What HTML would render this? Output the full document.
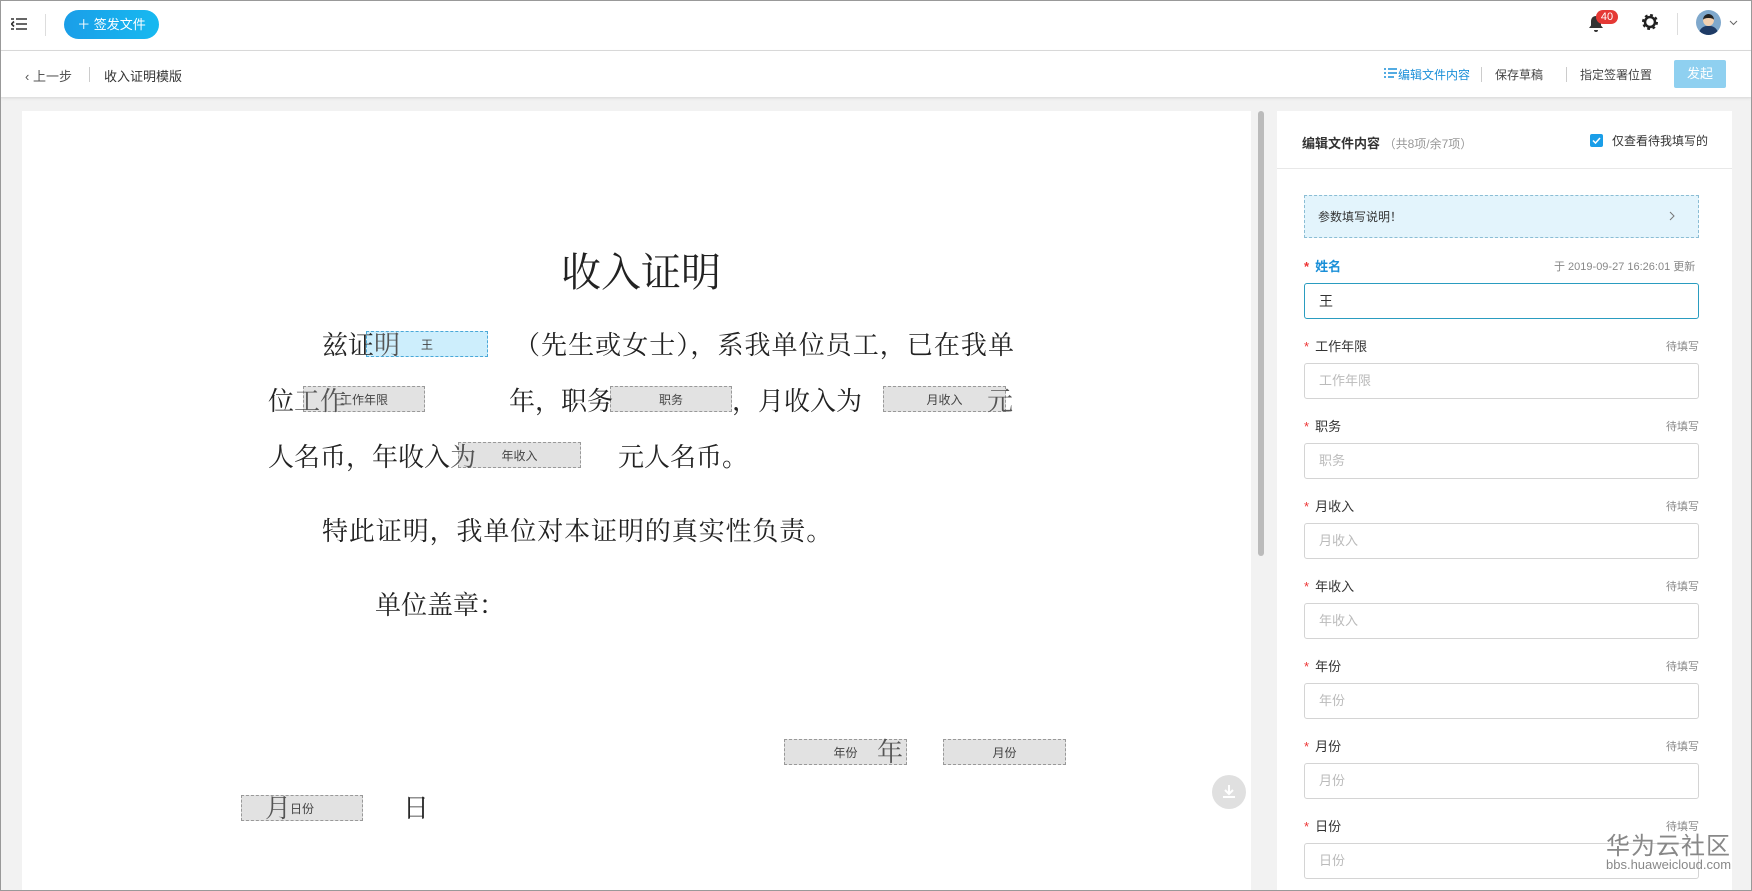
<!DOCTYPE html>
<html><head><meta charset="utf-8"><style>
*{margin:0;padding:0;box-sizing:border-box}
body{width:1752px;height:891px;overflow:hidden;background:#f2f2f2;font-family:"Liberation Sans","Noto Sans CJK SC",sans-serif;position:relative;color:#333}
.a{position:absolute;white-space:nowrap}
.top{left:0;top:0;width:1752px;height:51px;background:#fff;border-bottom:1px solid #ddd}
.sec{left:0;top:51px;width:1752px;height:46px;background:#fff;box-shadow:0 1px 3px rgba(0,0,0,.12)}
.doc{left:22px;top:111px;width:1229px;height:780px;background:#fff}
.serif{font-family:"Noto Serif CJK SC","Liberation Serif",serif;color:#222;font-size:26px;line-height:36px;font-feature-settings:"fwid";z-index:2}
.f{position:absolute;background:#e2e2e2;border:1px dashed #999;font-size:12px;color:#444;text-align:center;line-height:26px;font-family:"Liberation Sans","Noto Sans CJK SC",sans-serif;z-index:1}
.panel{left:1277px;top:111px;width:455px;height:780px;background:#fff}
.lbl{font-size:13px;color:#333}
.star{color:#e33;margin-right:6px}
.inp{position:absolute;left:1304px;width:395px;height:36px;border:1px solid #d4d4d4;border-radius:3px;font-size:13px;color:#bbb;padding-left:14px;line-height:34px}
.pend{font-size:11px;color:#888}
</style></head><body>
<div class="a top"></div>
<svg class="a" style="left:11px;top:17px" width="16" height="14"><path d="M5 2h11M5 7h11M5 12h11M0 2h3M0 12h3M3 4.5L0.5 7 3 9.5" stroke="#333" stroke-width="1.6" fill="none"/></svg>
<div class="a" style="left:45px;top:14px;width:1px;height:22px;background:#ddd"></div>
<div class="a" style="left:64px;top:10px;width:95px;height:29px;border-radius:15px;background:linear-gradient(90deg,#1a9ee8,#17b9f0);color:#fff;font-size:13px;line-height:29px;text-align:center">＋ 签发文件</div>
<svg class="a" style="left:1587px;top:15px" width="18" height="18"><path d="M9 1c-3.5 0-5 2.5-5 5.5v4L2 13h14l-2-2.5v-4C14 3.5 12.5 1 9 1zM7 15h4a2 2 0 0 1-4 0z" fill="#333"/></svg>
<div class="a" style="left:1596px;top:10px;width:22px;height:14px;background:#e53935;border-radius:7px;color:#fff;font-size:11px;line-height:14px;text-align:center">40</div>
<svg class="a" style="left:1641px;top:13px" width="18" height="18" viewBox="0 0 18 18"><circle cx="9" cy="9" r="6" fill="none" stroke="#222" stroke-width="4" stroke-dasharray="2.4 2.3"/><circle cx="9" cy="9" r="5" fill="none" stroke="#222" stroke-width="2.5"/></svg>
<div class="a" style="left:1677px;top:13px;width:1px;height:22px;background:#ddd"></div>
<div class="a" style="left:1696px;top:10px;width:25px;height:25px;border-radius:50%;background:#7fa8cc;overflow:hidden"><div style="position:absolute;left:7px;top:4px;width:11px;height:12px;border-radius:50%;background:#f2d0b0;border-top:4px solid #222"></div><div style="position:absolute;left:3px;top:16px;width:19px;height:12px;border-radius:8px 8px 0 0;background:#1f3b66"></div></div>
<svg class="a" style="left:1729px;top:20px" width="9" height="6"><path d="M1 1l3.5 3.5L8 1" stroke="#666" fill="none"/></svg>

<div class="a sec"></div>
<div class="a" style="left:25px;top:66px;font-size:13px;color:#555">‹ 上一步</div>
<div class="a" style="left:89px;top:67px;width:1px;height:15px;background:#ccc"></div>
<div class="a" style="left:104px;top:66px;font-size:13px;color:#333">收入证明模版</div>
<svg class="a" style="left:1384px;top:68px" width="13" height="11"><path d="M0 1h2M4 1h9M0 5h2M4 5h9M0 9h2M4 9h6" stroke="#1a8fd8" stroke-width="1.6"/></svg>
<div class="a" style="left:1398px;top:66px;font-size:12px;color:#1a8fd8">编辑文件内容</div>
<div class="a" style="left:1481px;top:67px;width:1px;height:15px;background:#ccc"></div>
<div class="a" style="left:1495px;top:66px;font-size:12px;color:#444">保存草稿</div>
<div class="a" style="left:1566px;top:67px;width:1px;height:15px;background:#ccc"></div>
<div class="a" style="left:1580px;top:66px;font-size:12px;color:#444">指定签署位置</div>
<div class="a" style="left:1674px;top:60px;width:52px;height:28px;background:#8fd0f0;border-radius:2px;color:#fff;font-size:13px;line-height:28px;text-align:center">发起</div>

<div class="a doc"></div>
<div class="a" style="left:1258px;top:111px;width:6px;height:445px;background:#bbb;border-radius:3px"></div>
<div class="a serif" style="left:561px;top:244px;font-size:40px;line-height:52px">收入证明</div>
<div class="a serif" style="left:322px;top:326px">兹证<span style="color:#555">明</span></div>
<div class="a serif" style="left:514px;top:326px;width:500px;text-align-last:justify;text-align:justify">（先生或女士），系我单位员工，已在我单</div>
<div class="a serif" style="left:268px;top:382px">位<span style="color:#555">工作</span></div>
<div class="a serif" style="left:509px;top:382px">年，职务</div>
<div class="a serif" style="left:732px;top:382px">，月收入为</div>
<div class="a serif" style="left:987px;top:382px;color:#555">元</div>
<div class="a serif" style="left:268px;top:438px">人名币，年收入<span style="color:#555">为</span></div>
<div class="a serif" style="left:618px;top:438px">元人名币。</div>
<div class="a serif" style="left:322px;top:512px;letter-spacing:0.9px">特此证明，我单位对本证明的真实性负责。</div>
<div class="a serif" style="left:375px;top:586px">单位盖章：</div>
<div class="a serif" style="left:877px;top:733px;color:#555">年</div>
<div class="a serif" style="left:265px;top:789px;color:#555">月</div>
<div class="a serif" style="left:403px;top:789px">日</div>
<div class="f" style="left:366px;top:331px;width:122px;height:26px;background:#cdeefc;border-color:#4aa8d8">王</div>
<div class="f" style="left:303px;top:386px;width:122px;height:26px">工作年限</div>
<div class="f" style="left:610px;top:386px;width:122px;height:26px">职务</div>
<div class="f" style="left:883px;top:386px;width:123px;height:26px">月收入</div>
<div class="f" style="left:458px;top:442px;width:123px;height:26px">年收入</div>
<div class="f" style="left:784px;top:739px;width:123px;height:26px">年份</div>
<div class="f" style="left:943px;top:739px;width:123px;height:26px">月份</div>
<div class="f" style="left:241px;top:795px;width:122px;height:26px">日份</div>
<div class="a" style="left:1212px;top:775px;width:34px;height:34px;border-radius:50%;background:#e0e0e0"></div>
<svg class="a" style="left:1220px;top:783px" width="18" height="18"><path d="M9 2v9M5 7l4 4 4-4M3 14h12" stroke="#fff" stroke-width="2" fill="none"/></svg>

<div class="a panel"></div>
<div class="a" style="left:1277px;top:168px;width:455px;height:1px;background:#e8e8e8"></div>
<div class="a" style="left:1302px;top:133px;font-size:13px;font-weight:bold;color:#333">编辑文件内容 <span style="font-weight:normal;color:#999;font-size:12px">（共8项/余7项）</span></div>
<div class="a" style="left:1590px;top:134px;width:13px;height:13px;background:#1a9ee8;border-radius:2px"></div>
<svg class="a" style="left:1592px;top:136px" width="9" height="9"><path d="M1 4.5l2.5 2.5L8 2" stroke="#fff" stroke-width="1.5" fill="none"/></svg>
<div class="a" style="left:1612px;top:132px;font-size:12px;color:#333">仅查看待我填写的</div>
<div class="a" style="left:1304px;top:195px;width:395px;height:43px;background:#e3f4fc;border:1px dashed #8bbdd4"></div>
<div class="a" style="left:1318px;top:208px;font-size:12px;color:#333">参数填写说明！</div>
<svg class="a" style="left:1669px;top:211px" width="6" height="10"><path d="M1 1l4 4-4 4" stroke="#777" fill="none"/></svg>

<div class="a lbl" style="left:1304px;top:256px;color:#1a8fd8;font-weight:bold"><span class="star">*</span>姓名</div>
<div class="a pend" style="left:1554px;top:258px">于 2019-09-27 16:26:01 更新</div>
<div class="inp" style="top:283px;border-color:#2a9cc0;color:#333;font-size:14px">王</div>

<div class="a lbl" style="left:1304px;top:336px"><span class="star">*</span>工作年限</div><div class="a pend" style="left:1666px;top:338px">待填写</div><div class="inp" style="top:363px">工作年限</div>
<div class="a lbl" style="left:1304px;top:416px"><span class="star">*</span>职务</div><div class="a pend" style="left:1666px;top:418px">待填写</div><div class="inp" style="top:443px">职务</div>
<div class="a lbl" style="left:1304px;top:496px"><span class="star">*</span>月收入</div><div class="a pend" style="left:1666px;top:498px">待填写</div><div class="inp" style="top:523px">月收入</div>
<div class="a lbl" style="left:1304px;top:576px"><span class="star">*</span>年收入</div><div class="a pend" style="left:1666px;top:578px">待填写</div><div class="inp" style="top:603px">年收入</div>
<div class="a lbl" style="left:1304px;top:656px"><span class="star">*</span>年份</div><div class="a pend" style="left:1666px;top:658px">待填写</div><div class="inp" style="top:683px">年份</div>
<div class="a lbl" style="left:1304px;top:736px"><span class="star">*</span>月份</div><div class="a pend" style="left:1666px;top:738px">待填写</div><div class="inp" style="top:763px">月份</div>
<div class="a lbl" style="left:1304px;top:816px"><span class="star">*</span>日份</div><div class="a pend" style="left:1666px;top:818px">待填写</div><div class="inp" style="top:843px">日份</div>

<div class="a" style="left:1606px;top:826px;font-size:24px;color:#888;letter-spacing:1px">华为云社区</div>
<div class="a" style="left:1606px;top:857px;font-size:13px;color:#888">bbs.huaweicloud.com</div>
<div class="a" style="left:0;top:0;width:1752px;height:891px;border:1px solid #999"></div>
</body></html>
